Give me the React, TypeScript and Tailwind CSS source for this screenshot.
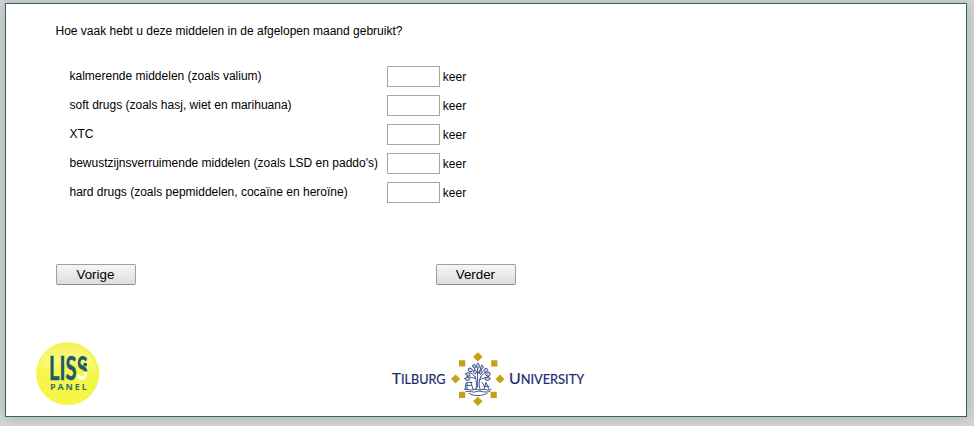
const drugs = [
  'kalmerende middelen (zoals valium)',
  'soft drugs (zoals hasj, wiet en marihuana)',
  'XTC',
  "bewustzijnsverruimende middelen (zoals LSD en paddo's)",
  'hard drugs (zoals pepmiddelen, cocaïne en heroïne)',
];

function NavButton({ label }: { label: string }) {
  return (
    <button className="h-[21px] w-20 rounded-[2px] border border-[#a0a0a0] border-b-[#8c8c8c] bg-linear-to-b from-[#f6f6f6] to-[#dddddd] text-[13.33px] leading-[19px] text-black">
      <span className="relative -left-[0.6px]">{label}</span>
    </button>
  );
}

function LissLogo() {
  return (
    <svg width="64" height="64" viewBox="0 0 64 64" className="block">
      <defs>
        <radialGradient id="ball" cx="0.42" cy="0.5" r="0.62">
          <stop offset="0" stopColor="#f6f75c" />
          <stop offset="0.65" stopColor="#f5f645" />
          <stop offset="1" stopColor="#f3f445" />
        </radialGradient>
        <linearGradient id="gloss" x1="0" y1="0" x2="0" y2="1">
          <stop offset="0" stopColor="#f0f060" stopOpacity="0.8" />
          <stop offset="0.5" stopColor="#fbfb98" stopOpacity="0.6" />
          <stop offset="1" stopColor="#fafb88" stopOpacity="0.5" />
        </linearGradient>
        <linearGradient id="twoTone" gradientUnits="userSpaceOnUse" x1="0" y1="15" x2="0" y2="38">
          <stop offset="0.6" stopColor="#215964" />
          <stop offset="0.66" stopColor="#fffff0" />
        </linearGradient>
      </defs>
      <circle cx="31.7" cy="31.7" r="31.5" fill="url(#ball)" />
      <path d="M3 23C8 7 20 2 31 2C46 2 58 13 61 29C52 33 46 21 31 22C20 23 13 31 3 23Z" fill="url(#gloss)" />
      <text
        x="13"
        y="38"
        textLength="38.8"
        lengthAdjust="spacingAndGlyphs"
        fontFamily="Lato, sans-serif"
        fontWeight="700"
        fontSize="31.5"
        fill="url(#twoTone)"
      >
        <tspan fill="#215964" stroke="#215964" strokeWidth="0.5">LIS</tspan>S
      </text>
      <circle cx="49.2" cy="22.6" r="1.9" fill="#215964" />
      <text x="13.9" y="47.6" textLength="37" fontSize="9" fontWeight="700" fill="#397064" fontFamily="'Open Sans', sans-serif">PANEL</text>
    </svg>
  );
}

function TilburgLogo() {
  return (
    <svg width="196" height="56" viewBox="0 0 196 56" className="block">
      <g fill="#1d2b6c" fontFamily="Lato, sans-serif" fontWeight="400" stroke="#1d2b6c" strokeWidth="0.2" fontSize="16.2">
        <text x="1.7" y="32.4" textLength="53.9" lengthAdjust="spacingAndGlyphs">
          T<tspan fontSize="13">ILBURG</tspan>
        </text>
        <text x="118.9" y="32.4" textLength="75.3" lengthAdjust="spacingAndGlyphs">
          U<tspan fontSize="13">NIVERSITY</tspan>
        </text>
      </g>
      <g fill="#c7a019">
        <path d="M87.8 0.2L92.6 4.8L87.8 9.4L83 4.8Z" />
        <path d="M87.8 44.7L92.6 49.3L87.8 53.9L83 49.3Z" />
        <path d="M65.6 22.4L70.2 27L65.6 31.6L61 27Z" />
        <path d="M110 22.4L114.6 27L110 31.6L105.4 27Z" />
        <path d="M69 8.3H75.2V14.4H69ZM101.2 8.3H107.4V14.4H101.2ZM69 39.8H75.2V46H69ZM100.6 39.8H106.8V46H100.6Z" />
      </g>
      <g transform="translate(0 -0.6)" fill="none" stroke="#2c437d" strokeWidth="0.9" strokeLinecap="round">
        <path d="M86 38C87 33 86.5 28 85 25M90 38C88.5 33 89 28 91 25M87.6 36V17M85 25L79 20M85.5 27L77 25M91 25L96 20M90 28L99 25M87.5 22L83 15M88 22L92 15" />
        <path fill="#c5cee0" d="M83 14C84 12 86 13 86 16C84 17 82 16 83 14ZM88 12C90 13 90 16 88 17C86 15 86 13 88 12ZM92 14C94 14 94 17 91 18C90 16 91 14 92 14ZM79 17C82 16 83 18 82 20C79 21 77 19 79 17ZM96 17C99 17 98 21 95 21C93 19 94 17 96 17ZM76 22C79 20 80 22 80 24C78 25 75 24 76 22ZM99 21C102 23 99 26 96 24C95 22 97 20 99 21ZM75 27C78 25 80 26 80 28C78 30 75 29 75 27ZM100 27C98 25 95 26 95 28C97 30 100 29 100 27ZM84 19C86 18 87 20 86 22C84 23 82 21 84 19ZM91 19C93 19 93 22 90 23C89 21 89 19 91 19Z" />
        <path d="M77 31V38M77 31H82M77 34H81M81 31L83 38M94 38L96 31L99 38M94 35H99M76 32L75 38M92 31L94 34" />
        <path d="M75 38C78 37 81 40 84 38C87 37 89 40 92 38C95 37 97 40 101 38M76 40C80 39 83 42 87 40C91 39 95 42 100 40M79 42C84 45 92 45 97 42" />
      </g>
    </svg>
  );
}

export default function App() {
  return (
    <div className="h-[426px] w-[974px] overflow-hidden bg-[#d5d4d5] pt-[3px] pl-[5px] font-['Liberation_Sans',Arial,sans-serif] text-[12px] leading-[14px] text-black">
      <main className="h-[414px] w-[962px] border border-[#236b70] bg-white pt-5 shadow-[0_0_12px_rgba(0,0,0,0.2)]">
        <h1 className="ml-[49.5px] font-normal">Hoe vaak hebt u deze middelen in de afgelopen maand gebruikt?</h1>
        <form>
          <div className="mt-7 ml-[63.5px] flex flex-col gap-2">
            {drugs.map((drug) => (
              <label key={drug} className="flex h-[21px] items-start">
                <span className="w-[317.5px] pt-[3px]">{drug}</span>
                <input aria-label={drug} className="h-[21px] w-[53px] border border-[#a5a5a5] bg-white px-1" />
                <span className="ml-[2.8px] pt-1">keer</span>
              </label>
            ))}
          </div>
          <div className="mt-[61px] ml-[50px] flex gap-[300px]">
            <NavButton label="Vorige" />
            <NavButton label="Verder" />
          </div>
        </form>
        <footer className="mt-[57px] ml-[30px] flex items-start">
          <LissLogo />
          <div className="mt-2.5 ml-[290px]">
            <TilburgLogo />
          </div>
        </footer>
      </main>
    </div>
  );
}
